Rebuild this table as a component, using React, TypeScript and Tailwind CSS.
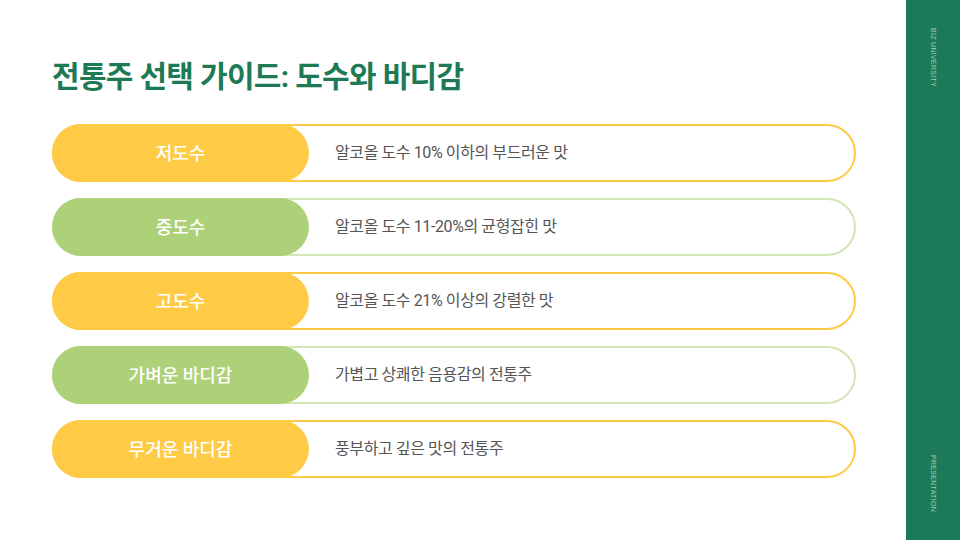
const rows = [
    { label: "저도수", desc: "알코올 도수 10% 이하의 부드러운 맛", tone: "yellow" },
    { label: "중도수", desc: "알코올 도수 11-20%의 균형잡힌 맛", tone: "green" },
    { label: "고도수", desc: "알코올 도수 21% 이상의 강렬한 맛", tone: "yellow" },
    { label: "가벼운 바디감", desc: "가볍고 상쾌한 음용감의 전통주", tone: "green" },
    { label: "무거운 바디감", desc: "풍부하고 깊은 맛의 전통주", tone: "yellow" },
]

const font = { fontFamily: 'Roboto, "Noto Sans CJK KR", sans-serif' }

const App = () => {
    return (
        <div className="flex w-[960px] h-[540px] bg-white overflow-hidden" style={font}>
            <div className="flex-1 pl-[52px] pr-[50px] pt-[56px]">
                <h1 className="text-[30px] leading-[42px] font-bold text-[#1E7A55] tracking-[-0.7px]">
                    전통주 선택 가이드: 도수와 바디감
                </h1>
                <div className="flex flex-col gap-4 mt-[26px]">
                    {rows.map((row) => (
                        <div
                            key={row.label}
                            className={
                                row.tone === "yellow"
                                    ? "flex items-center h-[58px] rounded-full border-2 border-[#FFCB47] bg-white"
                                    : "flex items-center h-[58px] rounded-full border-2 border-[#D2E6B5] bg-white"
                            }
                        >
                            <div
                                className={
                                    row.tone === "yellow"
                                        ? "flex items-center justify-center -ml-[2px] -my-[2px] h-[58px] w-[257px] shrink-0 rounded-full bg-[#FFCB47] text-white text-[18px] font-medium"
                                        : "flex items-center justify-center -ml-[2px] -my-[2px] h-[58px] w-[257px] shrink-0 rounded-full bg-[#ADD178] text-white text-[18px] font-medium"
                                }
                            >
                                {row.label}
                            </div>
                            <span className="ml-[26px] text-[16px] tracking-[-0.4px] text-[#555555]">{row.desc}</span>
                        </div>
                    ))}
                </div>
            </div>
            <div className="w-[54px] h-full bg-[#1C7A58] flex flex-col items-center justify-between pt-[28px] pb-[28px]">
                <span className="[writing-mode:vertical-rl] text-[7px] tracking-[0.3px] text-[#9ccfb6]" style={{ fontFamily: '"Liberation Sans", sans-serif' }}>
                    BIZ UNIVERSITY
                </span>
                <span className="[writing-mode:vertical-rl] text-[7px] tracking-[0.3px] text-[#9ccfb6]" style={{ fontFamily: '"Liberation Sans", sans-serif' }}>
                    PRESENTATION
                </span>
            </div>
        </div>
    )
}

export default App
